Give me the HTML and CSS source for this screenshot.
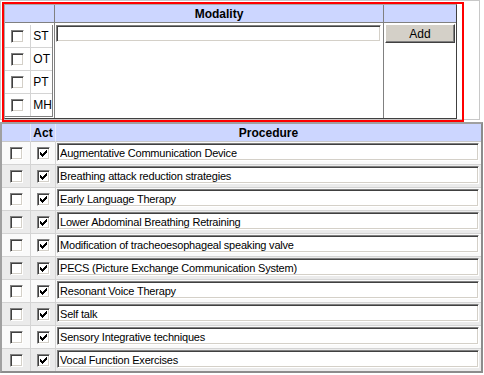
FILE: index.html
```html
<!DOCTYPE html>
<html lang="en">
<head>
    <meta charset="UTF-8">
    <title>Modality and Procedures</title>
    <link rel="stylesheet" href="styles.css">
</head>
<body>
    <div class="page">
        <!-- Modality -->
        <div class="modality-frame">
            <table class="modality">
                <tr class="head">
                    <th class="col-disc"></th>
                    <th class="col-name">Modality</th>
                    <th class="col-add"></th>
                </tr>
                <tr>
                    <td class="col-disc">
                        <table class="disc">
                            <tr><td class="disc-box"><span class="cb"></span></td><td class="disc-label">ST</td></tr>
                            <tr><td class="disc-box"><span class="cb"></span></td><td class="disc-label">OT</td></tr>
                            <tr><td class="disc-box"><span class="cb"></span></td><td class="disc-label">PT</td></tr>
                            <tr><td class="disc-box"><span class="cb"></span></td><td class="disc-label">MH</td></tr>
                        </table>
                    </td>
                    <td class="col-name"><input type="text" class="field modality-field"></td>
                    <td class="col-add"><button type="button" class="btn">Add</button></td>
                </tr>
            </table>
        </div>

        <!-- Procedures -->
        <table class="procedures">
            <tr class="head">
                <th class="col-sel"></th>
                <th class="col-act">Act</th>
                <th class="col-proc">Procedure</th>
            </tr>
            <tr>
                <td class="col-sel"><span class="cb"></span></td>
                <td class="col-act"><span class="cb"><svg width="7" height="7" viewBox="0 0 7 7"><path d="M0 2v3h1v1h1v1h1v-1h1v-1h1v-1h1v-1h1v-3h-1v1h-1v1h-1v1h-1v1h-1v-1h-1v-1z"/></svg></span></td>
                <td class="col-proc"><input type="text" class="field" value="Augmentative Communication Device"></td>
            </tr>
            <tr>
                <td class="col-sel"><span class="cb"></span></td>
                <td class="col-act"><span class="cb"><svg width="7" height="7" viewBox="0 0 7 7"><path d="M0 2v3h1v1h1v1h1v-1h1v-1h1v-1h1v-1h1v-3h-1v1h-1v1h-1v1h-1v1h-1v-1h-1v-1z"/></svg></span></td>
                <td class="col-proc"><input type="text" class="field" value="Breathing attack reduction strategies"></td>
            </tr>
            <tr>
                <td class="col-sel"><span class="cb"></span></td>
                <td class="col-act"><span class="cb"><svg width="7" height="7" viewBox="0 0 7 7"><path d="M0 2v3h1v1h1v1h1v-1h1v-1h1v-1h1v-1h1v-3h-1v1h-1v1h-1v1h-1v1h-1v-1h-1v-1z"/></svg></span></td>
                <td class="col-proc"><input type="text" class="field" value="Early Language Therapy"></td>
            </tr>
            <tr>
                <td class="col-sel"><span class="cb"></span></td>
                <td class="col-act"><span class="cb"><svg width="7" height="7" viewBox="0 0 7 7"><path d="M0 2v3h1v1h1v1h1v-1h1v-1h1v-1h1v-1h1v-3h-1v1h-1v1h-1v1h-1v1h-1v-1h-1v-1z"/></svg></span></td>
                <td class="col-proc"><input type="text" class="field" value="Lower Abdominal Breathing Retraining"></td>
            </tr>
            <tr>
                <td class="col-sel"><span class="cb"></span></td>
                <td class="col-act"><span class="cb"><svg width="7" height="7" viewBox="0 0 7 7"><path d="M0 2v3h1v1h1v1h1v-1h1v-1h1v-1h1v-1h1v-3h-1v1h-1v1h-1v1h-1v1h-1v-1h-1v-1z"/></svg></span></td>
                <td class="col-proc"><input type="text" class="field" value="Modification of tracheoesophageal speaking valve"></td>
            </tr>
            <tr>
                <td class="col-sel"><span class="cb"></span></td>
                <td class="col-act"><span class="cb"><svg width="7" height="7" viewBox="0 0 7 7"><path d="M0 2v3h1v1h1v1h1v-1h1v-1h1v-1h1v-1h1v-3h-1v1h-1v1h-1v1h-1v1h-1v-1h-1v-1z"/></svg></span></td>
                <td class="col-proc"><input type="text" class="field" value="PECS (Picture Exchange Communication System)"></td>
            </tr>
            <tr>
                <td class="col-sel"><span class="cb"></span></td>
                <td class="col-act"><span class="cb"><svg width="7" height="7" viewBox="0 0 7 7"><path d="M0 2v3h1v1h1v1h1v-1h1v-1h1v-1h1v-1h1v-3h-1v1h-1v1h-1v1h-1v1h-1v-1h-1v-1z"/></svg></span></td>
                <td class="col-proc"><input type="text" class="field" value="Resonant Voice Therapy"></td>
            </tr>
            <tr>
                <td class="col-sel"><span class="cb"></span></td>
                <td class="col-act"><span class="cb"><svg width="7" height="7" viewBox="0 0 7 7"><path d="M0 2v3h1v1h1v1h1v-1h1v-1h1v-1h1v-1h1v-3h-1v1h-1v1h-1v1h-1v1h-1v-1h-1v-1z"/></svg></span></td>
                <td class="col-proc"><input type="text" class="field" value="Self talk"></td>
            </tr>
            <tr>
                <td class="col-sel"><span class="cb"></span></td>
                <td class="col-act"><span class="cb"><svg width="7" height="7" viewBox="0 0 7 7"><path d="M0 2v3h1v1h1v1h1v-1h1v-1h1v-1h1v-1h1v-3h-1v1h-1v1h-1v1h-1v1h-1v-1h-1v-1z"/></svg></span></td>
                <td class="col-proc"><input type="text" class="field" value="Sensory Integrative techniques"></td>
            </tr>
            <tr>
                <td class="col-sel"><span class="cb"></span></td>
                <td class="col-act"><span class="cb"><svg width="7" height="7" viewBox="0 0 7 7"><path d="M0 2v3h1v1h1v1h1v-1h1v-1h1v-1h1v-1h1v-3h-1v1h-1v1h-1v1h-1v1h-1v-1h-1v-1z"/></svg></span></td>
                <td class="col-proc"><input type="text" class="field" value="Vocal Function Exercises"></td>
            </tr>
        </table>

        <!-- Selection highlight -->
        <div class="highlight"></div>
    </div>
</body>
</html>
```

FILE: styles.css
```css
/* General */
* {
    box-sizing: border-box;
}

body {
    margin: 0;
    font-family: "Liberation Sans", Arial, sans-serif;
    font-size: 11px;
    color: #000;
    background-color: #fff;
}

.page {
    position: relative;
    width: 484px;
}

table {
    border-collapse: separate;
    border-spacing: 0;
}

th, td {
    padding: 0;
}

th {
    font-size: 12px;
    font-weight: bold;
    text-align: center;
    background-color: #ccd6ff;
}

/* Modality block */
.modality-frame {
    width: 480px;
    height: 120px;
    padding: 3px 0 0 3px;
    border: 1px solid #c8c8c8;
}

.modality {
    width: 453px;
    height: 115px;
    border: 1px solid;
    border-color: #a8a8a8 #404040 #404040 #a8a8a8;
}

.modality .head th {
    height: 18px;
    border-bottom: 1px solid #808080;
}

.modality td {
    vertical-align: top;
}

.modality .col-disc {
    width: 50px;
    border-right: 1px solid #808080;
}

.modality .col-name {
    width: 329px;
    border-right: 1px solid #808080;
}

.modality .col-add {
    width: 72px;
}

.disc {
    width: 48px;
    margin-top: 2px;
    border-right: 1px solid #808080;
    border-bottom: 1px solid #808080;
}

.disc td {
    height: 23px;
    border-bottom: 1px solid #d4d4d4;
    vertical-align: middle;
}

.disc tr:last-child td {
    height: 22px;
    border-bottom: 0;
}

.disc-box {
    width: 27px;
    border-right: 1px solid #d4d4d4;
}

.disc-label {
    padding-left: 2px;
    font-size: 12px;
}

/* Classic controls */
.cb {
    display: block;
    width: 13px;
    height: 13px;
    margin: 0 auto;
    background-color: #fff;
    border: 1px solid;
    border-color: #808080 #fff #fff #808080;
    box-shadow: inset 1px 1px #404040, inset -1px -1px #d4d0c8;
}

.cb svg {
    display: block;
    margin: 2px 0 0 2px;
    shape-rendering: crispEdges;
}

.field {
    display: block;
    height: 18px;
    margin: 1px 0 0 1px;
    padding: 1px 2px 0;
    font-family: "Liberation Sans", Arial, sans-serif;
    font-size: 11px;
    letter-spacing: -0.2px;
    color: #000;
    background-color: #fff;
    border: 1px solid;
    border-color: #808080 #fff #fff #808080;
    box-shadow: inset 1px 1px #404040, inset -1px -1px #d4d0c8;
    outline: none;
}

.modality-field {
    width: 325px;
    height: 17px;
    margin-top: 2px;
}

.btn {
    display: block;
    width: 70px;
    height: 19px;
    margin: 1px 0 0 1px;
    padding: 0;
    font-family: "Liberation Sans", Arial, sans-serif;
    font-size: 12px;
    color: #000;
    background-color: #d4d0c8;
    border: 1px solid;
    border-color: #fff #404040 #404040 #fff;
    box-shadow: inset -1px -1px #808080;
}

/* Procedures */
.procedures {
    width: 483px;
    margin-top: 2px;
    border: 2px solid;
    border-color: #a0a0a0 #8c8c8c #8c8c8c #a0a0a0;
}

.procedures .head th {
    height: 18px;
    border-bottom: 1px solid #c8c8c8;
}

.procedures .head .col-sel,
.procedures .head .col-act {
    border-right: 1px solid #e6e9f8;
}

.procedures td {
    height: 23px;
    border-bottom: 1px solid #d4d4d4;
    background-color: #fafafa;
}

.procedures tr:nth-child(odd) td {
    background-color: #ebebeb;
}

.procedures tr:last-child td {
    height: 22px;
    border-bottom: 0;
}

.procedures .col-sel {
    width: 29px;
    border-right: 1px solid #d4d4d4;
}

.procedures .col-act {
    width: 25px;
    border-right: 1px solid #d4d4d4;
}

.procedures td.col-proc {
    vertical-align: top;
}

.procedures .field {
    width: 422px;
}

/* Red selection rectangle drawn over the modality block */
.highlight {
    position: absolute;
    left: 2px;
    top: 2px;
    width: 462px;
    height: 120px;
    border: 2px solid #ff0000;
    pointer-events: none;
}
```
